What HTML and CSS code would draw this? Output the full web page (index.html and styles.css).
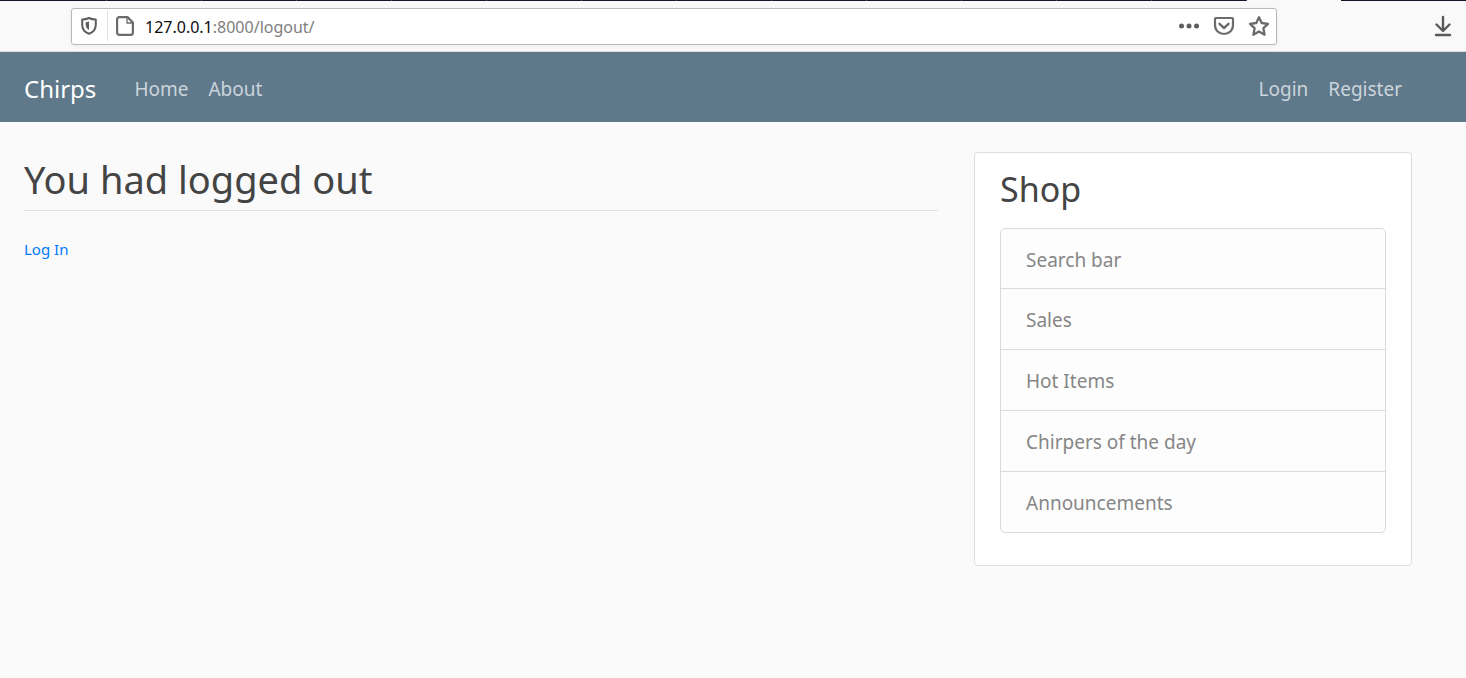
FILE: index.html
```html
<!DOCTYPE html>
<html lang="en">
<head>
<meta charset="utf-8">
<title>Chirps</title>
<link rel="stylesheet" href="styles.css">
</head>
<body>
<div class="tab-strip"><span class="tabs"></span><span class="active-tab"></span><span class="tabs-rest"></span></div>
<div class="toolbar">
  <div class="url-bar">
    <button class="icon-button shield" type="button" aria-label="Site protection">
      <svg width="18" height="20" viewBox="0 0 18 20" fill="none" stroke="#5d5d5f" stroke-width="2" stroke-linejoin="round"><path d="M9 2C7 3 4.600 3.400 2.200 3.400V8.500C2.200 13 4.500 16.200 9 17.700C13.500 16.200 15.800 13 15.800 8.500V3.400C13.400 3.400 11 3 9 2Z"/><path d="M9 5.500V14C6.800 12.800 5.700 11 5.700 8.500V6.200Z" fill="#5d5d5f" stroke="none"/></svg>
    </button>
    <button class="icon-button page" type="button" aria-label="Site information">
      <svg width="18" height="20" viewBox="0 0 18 20" fill="none" stroke="#6b6b6d" stroke-width="2.200" stroke-linejoin="round"><path d="M3.500 1.100H11.500L16.900 6.500V16.500Q16.900 18.900 14.500 18.900H3.500Q1.100 18.900 1.100 16.500V3.500Q1.100 1.100 3.500 1.100Z"/><path d="M11 1.500V7H16.500" stroke-width="1.300"/></svg>
    </button>
    <div class="address" role="textbox" contenteditable="true" spellcheck="false" aria-label="Address"><span class="host">127.0.0.1</span>:8000/logout/</div>
    <div class="actions">
      <button class="icon-button" type="button" aria-label="Page actions">
        <svg width="22" height="22" viewBox="0 0 22 22" fill="#5d5d5f"><circle cx="3.500" cy="11" r="2.500"/><circle cx="11" cy="11" r="2.500"/><circle cx="18.500" cy="11" r="2.500"/></svg>
      </button>
      <button class="icon-button" type="button" aria-label="Save to Pocket">
        <svg width="22" height="22" viewBox="0 0 22 22" fill="none" stroke="#6b6b6d" stroke-width="2.200" stroke-linecap="round" stroke-linejoin="round"><path d="M3 3H19Q20 3 20 4V10C20 15.500 16 19 11 19S2 15.500 2 10V4Q2 3 3 3Z"/><path d="M6.500 8.800L11 13L15.500 8.800" stroke-width="2.400"/></svg>
      </button>
      <button class="icon-button" type="button" aria-label="Bookmark this page">
        <svg width="22" height="22" viewBox="0 0 22 22" fill="none" stroke="#6b6b6d" stroke-width="2.300" stroke-linejoin="round"><path d="M11 2.200L13.700 8L20 8.800L15.400 13.200L16.600 19.700L11 16.500L5.400 19.700L6.600 13.200L2 8.800L8.300 8Z"/></svg>
      </button>
    </div>
  </div>
  <button class="icon-button" type="button" aria-label="Downloads">
    <svg width="18" height="22" viewBox="0 0 18 22" fill="none" stroke="#59595b" stroke-width="2.400" stroke-linecap="round" stroke-linejoin="round"><path d="M9 2V15.500M2.500 9.500L9 16L15.500 9.500M2 20H16"/></svg>
  </button>
</div>
<header class="navbar">
  <a class="brand" href="#">Chirps</a>
  <nav class="links" aria-label="Main"><a href="#">Home</a><a href="#">About</a></nav>
  <nav class="links account" aria-label="Account"><a href="#">Login</a><a href="#">Register</a></nav>
</header>
<div class="content">
  <main>
    <h1>You had logged out</h1>
    <a class="log-in" href="#">Log In</a>
  </main>
  <aside class="card">
    <h2>Shop</h2>
    <ul class="list">
      <li>Search bar</li>
      <li>Sales</li>
      <li>Hot Items</li>
      <li>Chirpers of the day</li>
      <li>Announcements</li>
    </ul>
  </aside>
</div>
</body>
</html>
```
FILE: styles.css
```css
* { box-sizing: border-box; }

body {
  margin: 0;
  min-height: 100vh;
  background: #fafafa;
  color: #444;
  font-family: "Segoe UI", "Noto Sans", "Open Sans", sans-serif;
}

a { text-decoration: none; }

.tab-strip { display: flex; height: 1px; }
.tabs {
  flex: 1;
  background: repeating-linear-gradient(90deg, #14142b 0, #14142b 94px, #50505f 94px, #50505f 95px) 12px 0;
}
.active-tab { width: 94px; background: #f9f9fa; }
.tabs-rest { width: 125px; background: #14142b; }

.toolbar {
  display: flex;
  align-items: center;
  justify-content: space-between;
  height: 51px;
  padding: 0 14px 0 71px;
  background: #f9f9fa;
  border-bottom: 1px solid #dcdcdd;
}

.url-bar {
  display: flex;
  align-items: center;
  flex: 1;
  height: 37px;
  margin-right: 157px;
  padding: 0 6px 0 8px;
  background: #fff;
  border: 1px solid #b9b9ba;
  border-radius: 3px;
  box-shadow: 0 1px 4px rgba(0, 0, 0, 0.06);
}

.icon-button {
  display: flex;
  padding: 0;
  background: none;
  border: 0;
}

.page {
  align-items: center;
  height: 30px;
  margin-left: 9px;
  padding-left: 8px;
  border-left: 1px solid #e2e2e3;
}

.address {
  flex: 1;
  padding: 2px 0 0 11px;
  font-size: 16px;
  line-height: 24px;
  color: #808080;
  outline: none;
}
.host { color: #0c0c0d; }

.actions { display: flex; gap: 13px; }

.navbar {
  display: flex;
  align-items: center;
  height: 70px;
  padding: 4px 64px 0 24px;
  background: #5f788a;
}
.brand {
  margin-right: 38px;
  color: #fff;
  font-size: 24px;
  line-height: 36px;
}
.links { display: flex; gap: 20px; }
.links a {
  color: #cbd5db;
  font-size: 19px;
  line-height: 30px;
}
.account { margin-left: auto; }

.content {
  display: grid;
  grid-template-columns: 914fr 438fr;
  gap: 36px;
  align-items: start;
  padding: 30px 54px 30px 24px;
}

h1 {
  margin: 0 0 26px;
  padding-bottom: 4px;
  border-bottom: 1px solid #dee2e6;
  font-size: 38px;
  font-weight: 400;
  line-height: 54px;
}

.log-in {
  color: #007bff;
  font-size: 15px;
  line-height: 24px;
}

.card {
  padding: 10px 25px 32px;
  background: #fff;
  border: 1px solid #ddd;
  border-radius: 4px;
}
h2 {
  margin: 0 0 13px;
  font-size: 34px;
  font-weight: 400;
  line-height: 52px;
}

.list {
  margin: 0;
  padding: 0;
  list-style: none;
  background: #fdfdfd;
  border: 1px solid #dadbdb;
  border-radius: 5px;
}
.list li {
  padding: 16px 25px 14px;
  color: #868686;
  font-size: 19px;
  line-height: 30px;
}
.list li:first-child { padding-bottom: 13px; }
.list li + li { border-top: 1px solid #dadbdb; }
```
